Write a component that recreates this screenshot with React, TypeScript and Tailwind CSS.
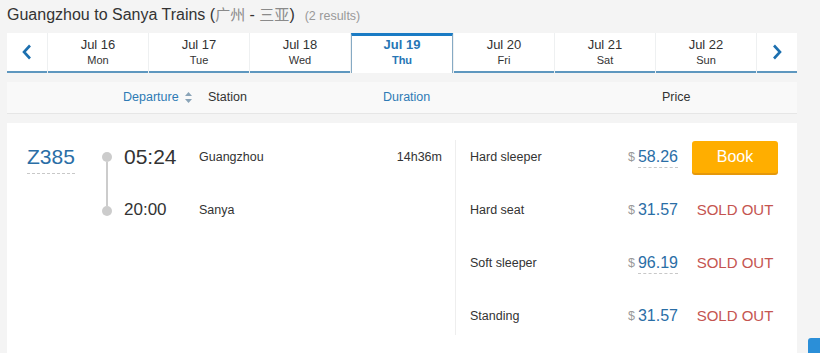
import { ReactNode } from 'react';

const days = [
  { date: 'Jul 16', day: 'Mon' },
  { date: 'Jul 17', day: 'Tue' },
  { date: 'Jul 18', day: 'Wed' },
  { date: 'Jul 19', day: 'Thu', active: true },
  { date: 'Jul 20', day: 'Fri' },
  { date: 'Jul 21', day: 'Sat' },
  { date: 'Jul 22', day: 'Sun' },
];

const seats = [
  { name: 'Hard sleeper', price: '58.26', dashed: true, available: true },
  { name: 'Hard seat', price: '31.57', dashed: false, available: false },
  { name: 'Soft sleeper', price: '96.19', dashed: true, available: false },
  { name: 'Standing', price: '31.57', dashed: false, available: false },
];

function Chevron({ dir }: { dir: 'left' | 'right' }) {
  return (
    <svg width="10" height="16" viewBox="0 0 10 16" fill="none">
      <path
        d={dir === 'left' ? 'M8 1.5 L2 8 L8 14.5' : 'M2 1.5 L8 8 L2 14.5'}
        stroke="#1c6faf"
        strokeWidth="2.6"
        strokeLinejoin="miter"
      />
    </svg>
  );
}

function ArrowCell({ children }: { children: ReactNode }) {
  return (
    <div className="w-[40px] h-full bg-white border-b-2 border-[#5e97bf] flex items-center justify-center">
      {children}
    </div>
  );
}

export default function App() {
  return (
    <div
      className="relative w-[820px] h-[353px] overflow-hidden bg-[#f4f4f4] text-[#333]"
      style={{ fontFamily: '"Liberation Sans", Arial, "Noto Sans CJK SC", sans-serif' }}
    >
      <div className="pl-[7px] w-[797px]">
        {/* Title */}
        <div className="h-[33px] pt-[5px] flex items-baseline">
          <span className="text-[16px] leading-[20px] text-[#333]">
            Guangzhou to Sanya Trains (<span className="text-[#8a8a8a] text-[15px]">广州</span> - <span className="text-[#8a8a8a] text-[15px]">三亚</span>)
          </span>
          <span className="ml-[10px] text-[12.5px] text-[#999]">(2 results)</span>
        </div>

        {/* Date strip */}
        <div className="h-[40px] flex gap-[1px] bg-[#eef0f1]">
          <ArrowCell>
            <Chevron dir="left" />
          </ArrowCell>
          {days.map((d) =>
            d.active ? (
              <div
                key={d.date}
                className="flex-1 h-full bg-white border-t-[3px] border-x border-t-[#1a7bc4] border-x-[#86aac4] flex flex-col items-center pt-[1px] font-bold text-[#2776b5]"
              >
                <span className="text-[13px] leading-[16px]">{d.date}</span>
                <span className="text-[11px] leading-[14px]">{d.day}</span>
              </div>
            ) : (
              <div
                key={d.date}
                className="flex-1 h-full bg-white border-b-2 border-[#5e97bf] flex flex-col items-center pt-[4px]"
              >
                <span className="text-[13px] leading-[16px]">{d.date}</span>
                <span className="text-[11px] leading-[14px]">{d.day}</span>
              </div>
            )
          )}
          <ArrowCell>
            <Chevron dir="right" />
          </ArrowCell>
        </div>

        {/* Column header */}
        <div className="mt-[9px] h-[32px] bg-[#f9f9f9] border-b border-[#e6e6e6] flex items-center text-[12.5px]">
          <div className="w-[116px]" />
          <div className="w-[85px] flex items-center text-[#2e7bb5]">
            Departure
            <svg className="ml-[6px]" width="7" height="11" viewBox="0 0 7 11">
              <path d="M3.5 0 L7 4 L0 4 Z" fill="#8aa4b8" />
              <path d="M3.5 11 L7 7 L0 7 Z" fill="#8aa4b8" />
            </svg>
          </div>
          <div className="w-[175px]">Station</div>
          <div className="w-[279px] text-[#2e7bb5]">Duration</div>
          <div>Price</div>
        </div>

        {/* Result card */}
        <div className="mt-[9px] bg-white h-[240px] flex">
          {/* Train info */}
          <div className="w-[448px] pt-[17px] flex">
            <div className="w-[95px] pl-[20px]">
              <span className="inline-block mt-[4px] text-[21px] leading-[26px] pb-[3px] text-[#2a6ea6] border-b border-dashed border-[#c8c8c8]">
                Z385
              </span>
            </div>
            <div className="w-[10px] flex flex-col items-center pt-[12px]">
              <div className="w-[10px] h-[10px] rounded-full bg-[#cccccc]" />
              <div className="w-[2px] h-[44px] bg-[#cccccc]" />
              <div className="w-[10px] h-[10px] rounded-full bg-[#cccccc]" />
            </div>
            <div className="flex-1 pl-[12px] pr-[13px] flex flex-col gap-[19px]">
              <div className="h-[34px] flex items-center">
                <span className="w-[75px] text-[21px]">05:24</span>
                <span className="flex-1 text-[12.5px]">Guangzhou</span>
                <span className="text-[12.5px]">14h36m</span>
              </div>
              <div className="h-[34px] flex items-center">
                <span className="w-[75px] text-[17px]">20:00</span>
                <span className="flex-1 text-[12.5px]">Sanya</span>
              </div>
            </div>
          </div>

          {/* Seats */}
          <div className="flex-1 mt-[17px] h-[195px] border-l border-[#eeeeee] pl-[14px] pr-[19px] flex flex-col gap-[19px]">
            {seats.map((s) => (
              <div key={s.name} className="h-[34px] flex items-center">
                <span className="flex-1 text-[12.5px]">{s.name}</span>
                <span className="text-[12.5px] text-[#999] mr-[3px]">$</span>
                <span
                  className={`text-[16px] leading-[20px] text-[#2a6ea6] ${
                    s.dashed ? 'border-b border-dashed border-[#c8c8c8]' : 'border-b border-transparent'
                  }`}
                >
                  {s.price}
                </span>
                <div className="ml-[14px] w-[86px] flex justify-center">
                  {s.available ? (
                    <button className="w-[86px] h-[32px] rounded-[3px] bg-[#ffae00] text-white text-[16px] shadow-[0_2px_0_#e5980a]">
                      Book
                    </button>
                  ) : (
                    <span className="text-[15px] text-[#c55450]">SOLD OUT</span>
                  )}
                </div>
              </div>
            ))}
          </div>
        </div>
      </div>

      {/* Floating widget peeking in the corner */}
      <div className="absolute left-[808px] top-[338px] w-[20px] h-[20px] rounded-tl-[3px] bg-[#2b8fd8]" />
    </div>
  );
}
